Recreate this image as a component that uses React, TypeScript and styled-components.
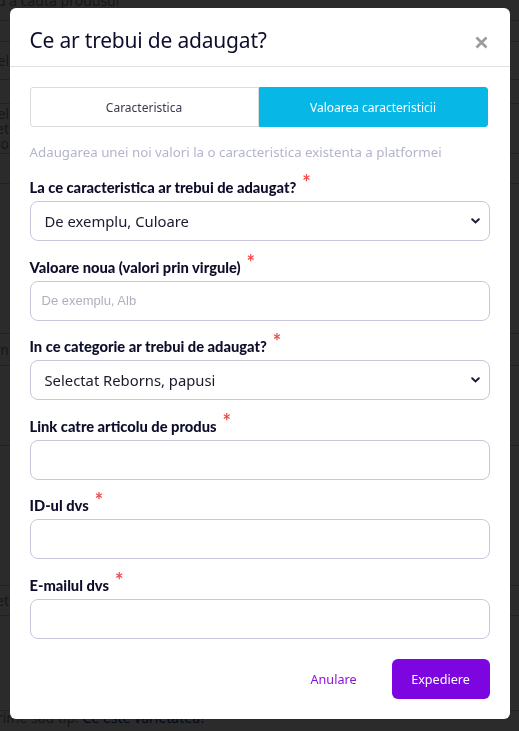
import { useState } from 'react';
import styled, { createGlobalStyle } from 'styled-components';

const GlobalStyle = createGlobalStyle`
  html, body {
    margin: 0;
    padding: 0;
    background: #ffffff;
  }
  body {
    font-family: 'Noto Sans', 'Open Sans', sans-serif;
    color: #1a1a2e;
    overflow: hidden;
  }
  * {
    box-sizing: border-box;
  }
`;

type TabProps = {
  active?: boolean;
};

type RowProps = {
  h: number;
};

type FieldConfig = {
  label: string;
  kind: 'select' | 'input';
  value?: string;
  placeholder?: string;
};

type PageRowConfig = {
  h: number;
  lines?: string[];
};

const fields: FieldConfig[] = [
  { label: 'La ce caracteristica ar trebui de adaugat?', kind: 'select', value: 'De exemplu, Culoare' },
  { label: 'Valoare noua (valori prin virgule)', kind: 'input', placeholder: 'De exemplu, Alb' },
  { label: 'In ce categorie ar trebui de adaugat?', kind: 'select', value: 'Selectat Reborns, papusi' },
  { label: 'Link catre articolu de produs', kind: 'input' },
  { label: 'ID-ul dvs', kind: 'input' },
  { label: 'E-mailul dvs', kind: 'input' },
];

// page behind the dimmed overlay, only the left edge peeks out
const pageRows: PageRowConfig[] = [
  { h: 21 },
  { h: 38, lines: ['Model'] },
  { h: 24 },
  { h: 50, lines: ['Model', 'Varietet', 'Raco'] },
  { h: 30 },
  { h: 150 },
  { h: 32, lines: ['Margin'] },
  { h: 80 },
  { h: 140 },
  { h: 30, lines: ['Varietet'] },
  { h: 95 },
];

const Chevron = () => (
  <svg width="9" height="6" viewBox="0 0 9 6" fill="none">
    <path d="M1.2 1.2 L4.5 4.4 L7.8 1.2" stroke="#1c1c3a" strokeWidth="2" strokeLinecap="round" />
  </svg>
);

const App = () => {
  const [tab, setTab] = useState(1);

  return (
    <>
      <GlobalStyle />
      <Page>
        <TopLine>u a cauta produsul</TopLine>
        {pageRows.map((row, i) => (
          <PageRow key={i} h={row.h}>
            {row.lines && (
              <RowLabel>
                {row.lines.map(line => (
                  <div key={line}>{line}</div>
                ))}
              </RowLabel>
            )}
          </PageRow>
        ))}
        <BottomLine>
          marime sau tip. <PageLink>Ce este varietatea?</PageLink>
        </BottomLine>
      </Page>
      <Overlay>
        <Modal>
          <Header>
            <Title>Ce ar trebui de adaugat?</Title>
            <CloseButton aria-label="close">
              <svg width="13" height="13" viewBox="0 0 13 13">
                <path d="M1.5 1.5 L11.5 11.5 M11.5 1.5 L1.5 11.5" stroke="#9b9b9b" strokeWidth="2.6" />
              </svg>
            </CloseButton>
          </Header>
          <Body>
            <Tabs>
              <Tab active={tab === 0} onClick={() => setTab(0)}>
                Caracteristica
              </Tab>
              <Tab active={tab === 1} onClick={() => setTab(1)}>
                Valoarea caracteristicii
              </Tab>
            </Tabs>
            <Hint>Adaugarea unei noi valori la o caracteristica existenta a platformei</Hint>
            {fields.map(field => (
              <Field key={field.label}>
                <Label>
                  {field.label}
                  <Required>*</Required>
                </Label>
                {field.kind === 'select' ? (
                  <SelectBox>
                    <span>{field.value}</span>
                    <Chevron />
                  </SelectBox>
                ) : (
                  <TextInput placeholder={field.placeholder} />
                )}
              </Field>
            ))}
          </Body>
          <Footer>
            <CancelButton>Anulare</CancelButton>
            <SubmitButton>Expediere</SubmitButton>
          </Footer>
        </Modal>
      </Overlay>
    </>
  );
};

const Page = styled.div`
  display: flex;
  flex-direction: column;
  height: 731px;
  overflow: hidden;
  font-family: 'Noto Sans', sans-serif;
  font-size: 14px;
  color: #8a8a8a;
`;

const TopLine = styled.div`
  height: 20px;
  margin-left: -3px;
  margin-top: -6px;
  padding-bottom: 6px;
  line-height: 14px;
  border-bottom: 1px solid #c4c4c4;
  white-space: nowrap;
  overflow: hidden;
  box-sizing: content-box;
`;

const PageRow = styled.div<RowProps>`
  height: ${({ h }) => h}px;
  flex-shrink: 0;
  display: flex;
  align-items: center;
  border-bottom: 1px solid #c4c4c4;
`;

const RowLabel = styled.div`
  width: 9px;
  direction: rtl;
  white-space: nowrap;
  line-height: 15px;
  text-align: right;
`;

const BottomLine = styled.div`
  margin-left: -24px;
  line-height: 14px;
  white-space: nowrap;
`;

const PageLink = styled.span`
  color: #0f3f9a;
`;

const Overlay = styled.div`
  position: fixed;
  inset: 0;
  background: rgba(0, 0, 0, 0.83);
  display: flex;
  justify-content: center;
  align-items: flex-start;
  padding-top: 8px;
`;

const Modal = styled.div`
  width: 500px;
  height: 711px;
  background: #ffffff;
  border-radius: 6px;
  display: flex;
  flex-direction: column;
  overflow: hidden;
`;

const Header = styled.div`
  height: 59px;
  display: flex;
  align-items: center;
  justify-content: space-between;
  padding: 0 22px 0 20px;
  border-bottom: 1px solid #dee2e6;
`;

const Title = styled.h2`
  margin: 0;
  padding-top: 5px;
  font-family: 'Noto Sans', 'Open Sans', sans-serif;
  font-size: 21px;
  font-weight: 400;
  color: #0e0e2c;
  letter-spacing: -0.2px;
`;

const CloseButton = styled.button`
  border: none;
  background: none;
  padding: 0;
  margin-top: 10px;
  display: flex;
  cursor: pointer;
`;

const Body = styled.div`
  padding: 20px 20px 0 20px;
  display: flex;
  flex-direction: column;
`;

const Tabs = styled.div`
  display: flex;
  height: 40px;
  margin-right: 2px;
`;

const Tab = styled.button<TabProps>`
  flex: 1;
  border: 1px solid ${({ active }) => (active ? '#07b8e7' : '#d9dbe0')};
  background: ${({ active }) => (active ? '#07b8e7' : '#ffffff')};
  color: ${({ active }) => (active ? '#ffffff' : '#3a3a4a')};
  font-family: 'Noto Sans', sans-serif;
  font-size: 12px;
  cursor: pointer;
  border-radius: 3px 0 0 3px;

  & + & {
    border-radius: 0 3px 3px 0;
  }
`;

const Hint = styled.p`
  margin: 15px 0 14px;
  height: 20px;
  line-height: 20px;
  font-family: 'Noto Sans', sans-serif;
  font-size: 13.3px;
  color: #b3b5c9;
  white-space: nowrap;
`;

const Field = styled.div`
  display: flex;
  flex-direction: column;
  margin-bottom: 14.6px;
`;

const Label = styled.label`
  height: 20px;
  line-height: 18px;
  margin-bottom: 5px;
  font-family: 'Lato', sans-serif;
  font-weight: 900;
  font-size: 14.7px;
  color: #0e0e2c;
  white-space: nowrap;
`;

const Required = styled.span`
  color: #f24a4a;
  font-size: 20px;
  font-weight: 700;
  margin-left: 6px;
  position: relative;
  top: -3px;
`;

const SelectBox = styled.div`
  height: 40px;
  display: flex;
  align-items: center;
  justify-content: space-between;
  padding: 0 9px 0 14px;
  border: 1px solid #c9c6dc;
  border-radius: 8px;
  font-family: 'Noto Sans', sans-serif;
  font-size: 14.8px;
  color: #1a1a2e;
`;

const TextInput = styled.input`
  height: 40px;
  width: 100%;
  padding: 0 11px;
  border: 1px solid #c9c6dc;
  border-radius: 8px;
  font-family: 'Liberation Sans', Arial, sans-serif;
  font-size: 13px;
  outline: none;

  &::placeholder {
    color: #aeb0bd;
  }
`;

const Footer = styled.div`
  margin-top: auto;
  padding: 0 20px 20px;
  display: flex;
  justify-content: flex-end;
  align-items: center;
  gap: 23px;
`;

const CancelButton = styled.button`
  border: none;
  background: none;
  padding: 0 12px;
  height: 40px;
  font-family: 'Noto Sans', sans-serif;
  font-size: 12.6px;
  color: #8a10dc;
  cursor: pointer;
`;

const SubmitButton = styled.button`
  width: 98px;
  height: 40px;
  border: none;
  border-radius: 6px;
  background: #7d05df;
  color: #ffffff;
  font-family: 'Noto Sans', sans-serif;
  font-size: 12.6px;
  cursor: pointer;
`;

export default App;
